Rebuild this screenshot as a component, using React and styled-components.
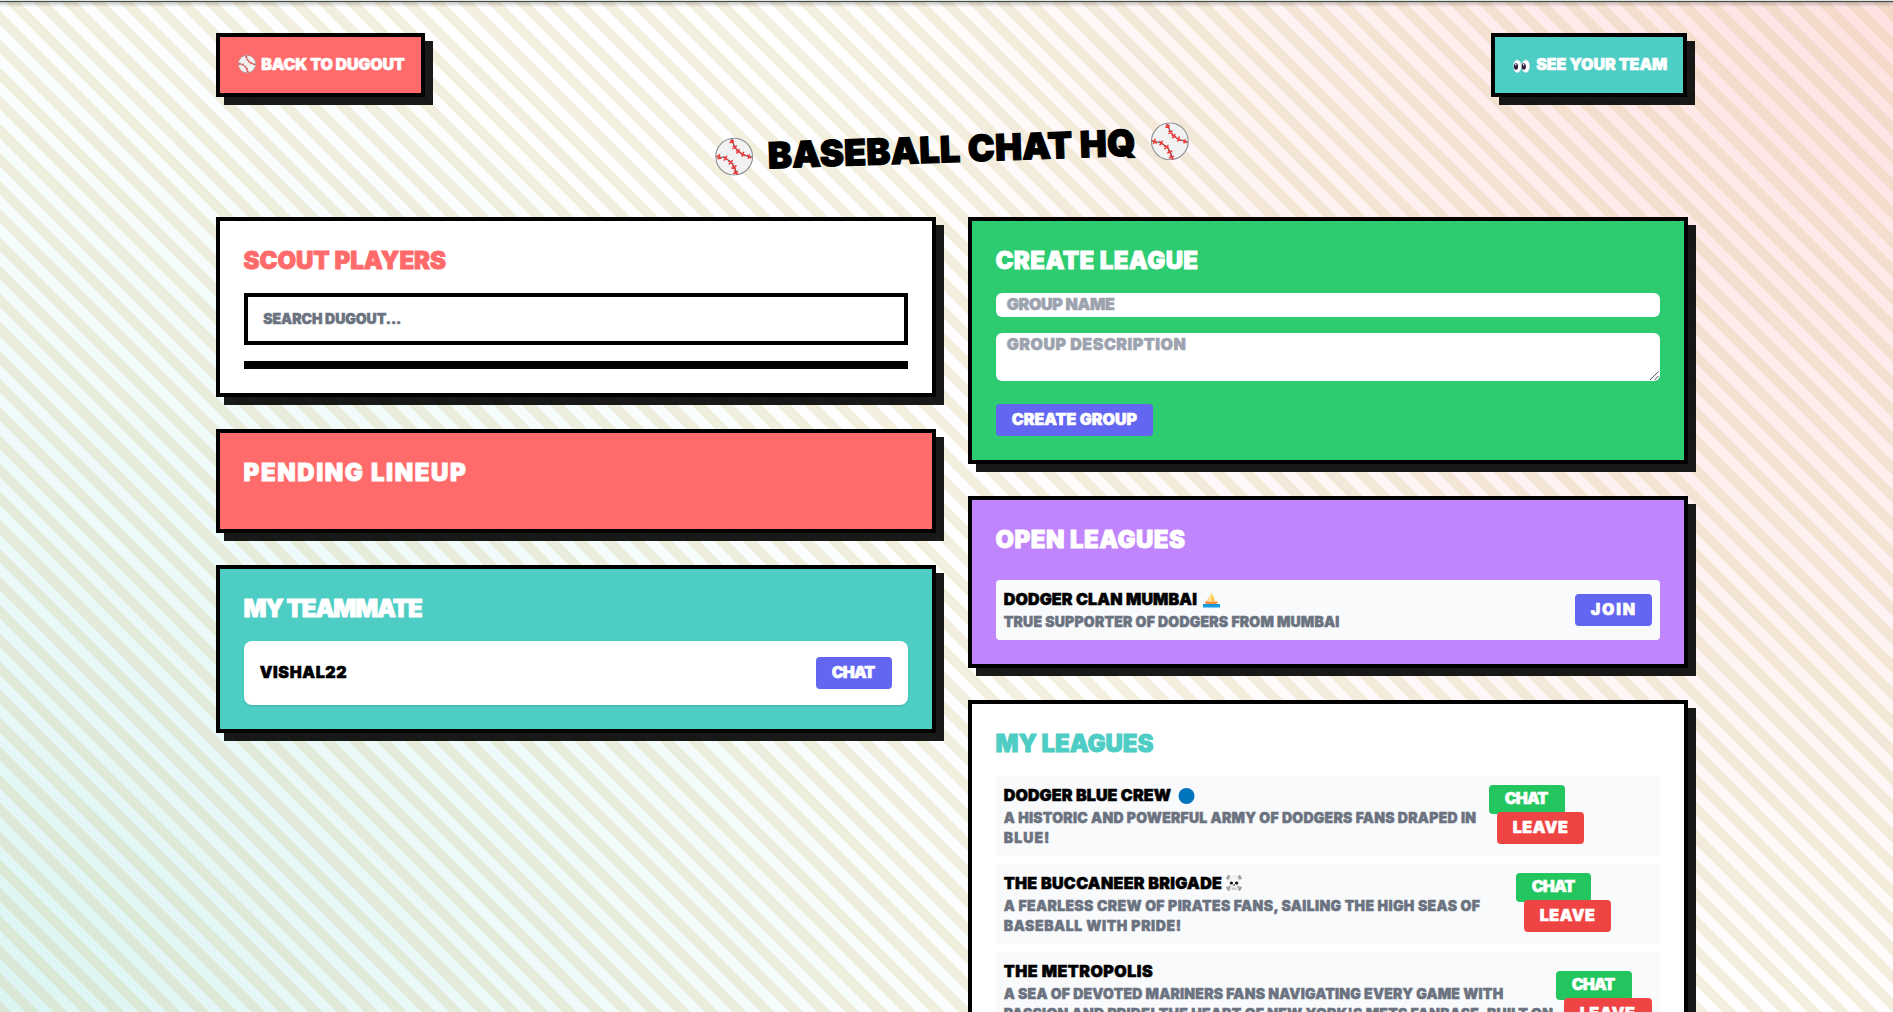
import React, { useLayoutEffect, useRef, useState } from "react";
import styled, { createGlobalStyle } from "styled-components";

const GlobalStyle = createGlobalStyle`
  *, *::before, *::after { box-sizing: border-box; }
  html, body { margin: 0; padding: 0; height: 1012px; overflow: hidden; }
  body {
    font-family: Inter, "Liberation Sans", sans-serif;
    font-weight: 900;
    font-size: 16px;
    line-height: 24px;
    color: #000;
    text-transform: uppercase;
  }
  h1, h2, p { margin: 0; font-size: inherit; font-weight: inherit; }
  button { font: inherit; color: inherit; text-transform: inherit; }
`;

const Page = styled.div`
  width: 1904px;
  height: 1012px;
  overflow: hidden;
  background:
    linear-gradient(#dfe6df 0 1px, #454a45 1px 2px, rgba(0, 0, 0, 0.22) 2px, rgba(0, 0, 0, 0) 7px) 0 0 / 100% 7px no-repeat,
    repeating-linear-gradient(45deg, transparent 0 10px, rgba(207, 189, 120, 0.24) 10px 20px) 0 0 / 1904px 1029px no-repeat,
    radial-gradient(circle at 0 100%, rgba(78, 205, 196, 0.2), rgba(78, 205, 196, 0) 50%),
    radial-gradient(circle at 100% 0, rgba(255, 107, 107, 0.2), rgba(255, 107, 107, 0) 50%),
    #fff;
`;

const Container = styled.div`
  width: 1536px;
  margin: 0 auto;
  padding: 33px 32px;
`;

const TopBar = styled.nav`
  display: flex;
  justify-content: space-between;
  padding-right: 1px;
`;

const NavButton = styled.button`
  display: flex;
  align-items: center;
  gap: ${(p) => p.$gap}px;
  width: ${(p) => p.$width}px;
  height: 64px;
  padding: 0 0 2px 17.5px;
  border: 4px solid #000;
  border-radius: 0;
  background: ${(p) => p.$color};
  color: #fff;
  box-shadow: 8px 8px 0 rgba(0, 0, 0, 0.9);
`;

const Title = styled.h1`
  display: flex;
  align-items: center;
  justify-content: center;
  gap: 15px;
  height: 40px;
  margin: 32px 0 48px;
  font-size: 36px;
  line-height: 40px;
  transform: rotate(-2deg);
`;

const Columns = styled.main`
  display: grid;
  grid-template-columns: 1fr 1fr;
  gap: 32px;
  align-items: start;
`;

const Column = styled.div`
  display: flex;
  flex-direction: column;
  gap: 32px;
`;

const Card = styled.section`
  padding: 24px;
  border: 4px solid #000;
  background: ${(p) => p.$color || "#fff"};
  box-shadow: 8px 8px 0 rgba(0, 0, 0, 0.9);
`;

const Heading = styled.h2`
  height: 32px;
  margin-bottom: ${(p) => p.$gap || 16}px;
  font-size: 24px;
  line-height: 32px;
  color: ${(p) => p.$color || "#fff"};
`;

const SearchBox = styled.div`
  display: flex;
  align-items: center;
  height: 52px;
  padding: 0 15.5px;
  border: 4px solid #000;
  font-size: 14px;
  color: #6b7280;
`;

const Results = styled.div`
  height: 8px;
  margin-top: 16px;
  background: #000;
`;

const Field = styled.div`
  display: flex;
  justify-content: space-between;
  height: ${(p) => p.$height}px;
  margin-bottom: ${(p) => p.$gap}px;
  padding: 0 1px 1px 11px;
  border-radius: 6px;
  background: #fff;
  color: #9ca3af;
  line-height: 22px;
`;

const Grip = styled.svg`
  display: block;
  align-self: flex-end;
`;

const Button = styled.button`
  display: block;
  width: ${(p) => p.$width}px;
  height: 32px;
  padding: 0 0 2px 16px;
  border: 0;
  border-radius: 4px;
  background: ${(p) => p.$color || "#6366f1"};
  color: #fff;
  text-align: left;
  line-height: 28px;
`;

const TeammateRow = styled.div`
  display: flex;
  align-items: center;
  justify-content: space-between;
  height: 64px;
  padding: 0 16px;
  border-radius: 8px;
  background: #fff;
  box-shadow: 0 1px 2px rgba(0, 0, 0, 0.15);
`;

const TeammateName = styled.div`
  height: 24px;
  line-height: 22px;
`;

const LeagueRow = styled.div`
  display: flex;
  align-items: center;
  justify-content: space-between;
  min-height: ${(p) => p.$height || 60}px;
  padding: 8px;
  border-radius: 4px;
  background: #f9fafc;

  & + & { margin-top: 8px; }
`;

const LeagueInfo = styled.div`
  align-self: flex-start;
`;

const LeagueName = styled.div`
  display: flex;
  align-items: center;
  gap: ${(p) => p.$gap || 0}px;
  height: 24px;
  line-height: 22px;
  padding-bottom: 2px;
`;

const Description = styled.p`
  font-size: 14px;
  line-height: 20px;
  color: #6b7280;
`;

const Actions = styled.div`
  flex: none;
  width: ${(p) => p.$width}px;
  margin-bottom: 3px;
`;

const ChatButton = styled(Button)`
  height: 29px;
  line-height: 27px;
`;

const LeaveButton = styled(Button)`
  position: relative;
  margin: -2px 0 0 8px;
`;

const Line = styled.span`
  display: block;
  height: 20px;
  white-space: nowrap;
`;

const Run = styled.span`
  display: inline-block;
  white-space: nowrap;
  margin-left: -0.02em;
  -webkit-text-stroke: 0.035em currentColor;
`;

/* Tracks the lettering so that the word fills the given width. */
function Lettering({ width, children }) {
  const ref = useRef(null);
  const [spacing, setSpacing] = useState(0);
  useLayoutEffect(() => {
    const em = parseFloat(getComputedStyle(ref.current).fontSize);
    setSpacing((width + em * 0.03 - ref.current.offsetWidth) / (children.length - 1));
  }, [width, children]);
  return (
    <Run ref={ref} style={{ letterSpacing: spacing, marginRight: -spacing }}>
      {children}
    </Run>
  );
}

const Baseball = ({ size, bold }) => (
  <svg width={size} height={size} viewBox="0 0 37 37">
    <circle cx="18.5" cy="18.5" r="17.9" fill="#f2f2f2" stroke="#8b8d90" strokeWidth="1.1" />
    <g fill="none" stroke="#55585c" strokeWidth={bold ? 1.3 : 1.1}>
      <path d="M17 1C18 10 24 18 36 19.5" />
      <path d="M1 18C12 18 19 25 20.5 36" />
    </g>
    <g fill="none" stroke="#f03a3a" strokeWidth={bold ? 1.6 : 1.5}>
      <path d="M14.500 5l4.500-2M15.500 2l3 4M17 11l4.500-3M17.500 8l4 3.500M21 15.500l3-4M20.500 12.500l4.500 2.500M26 19l2-5M25 15.500l4.500 2.500M32 21l1.500-4M31 17.500l4 3" />
      <path d="M2.500 20.500l2-5M1.500 17l4.500 3M8.500 22l3-4.500M8 18l4 3.500M13 26l4-4M12.500 22.500l5 3M15.500 30l5-2.500M16.500 27l3 4M17 35l5-2M18 32l3.500 4" />
    </g>
  </svg>
);

const Eyes = () => (
  <svg width="17" height="17" viewBox="0 0 17 17">
    <ellipse cx="4.3" cy="10.2" rx="3.9" ry="6.3" fill="#fff" stroke="#d3dade" strokeWidth=".6" />
    <ellipse cx="12.7" cy="10.2" rx="3.9" ry="6.3" fill="#fff" stroke="#d3dade" strokeWidth=".6" />
    <ellipse cx="3" cy="10.5" rx="2.1" ry="3.3" fill="#31213f" />
    <ellipse cx="10.8" cy="10.5" rx="2.1" ry="3.3" fill="#31213f" />
    <circle cx="2.800" cy="8.700" r=".8" fill="#fff" />
    <circle cx="10.600" cy="8.700" r=".8" fill="#fff" />
  </svg>
);

const Boat = () => (
  <svg width="17" height="17" viewBox="0 0 17 17">
    <path d="M7.500 1.500v8.500H3.200C5.300 7.500 7 5 7.500 1.500z" fill="#ffd983" />
    <path d="M8.200 1c1 4 3.300 5.500 3.300 9H8.200z" fill="#ffc52e" />
    <path d="M1.500 10.500h13.500l-2 3.500H3.500z" fill="#f78c3b" />
    <path d="M0 13h17v3.500H0z" fill="#139be0" />
  </svg>
);

const BlueCircle = () => (
  <svg width="17" height="17" viewBox="0 0 17 17">
    <circle cx="8.500" cy="9" r="8" fill="#0075bd" />
  </svg>
);

const Skull = () => (
  <svg width="16" height="16" viewBox="0 0 16 16">
    <path d="M2 2.500l12 11M14 2.500l-12 11" stroke="#a3a3a3" strokeWidth="2" />
    <g fill="#a3a3a3">
      <circle cx="2.600" cy="1.500" r="1.400" /><circle cx="1.500" cy="3.200" r="1.400" />
      <circle cx="13.400" cy="1.500" r="1.400" /><circle cx="14.500" cy="3.200" r="1.400" />
      <circle cx="2.600" cy="14.500" r="1.400" /><circle cx="1.500" cy="12.800" r="1.400" />
      <circle cx="13.400" cy="14.500" r="1.400" /><circle cx="14.500" cy="12.800" r="1.400" />
    </g>
    <path d="M8 1C4.500 1 2.800 3.500 2.800 6.500c0 2 .7 3.200 1.700 4V14c0 .7 7 .7 7 0v-3.500c1-.8 1.700-2 1.700-4C13.200 3.500 11.500 1 8 1z" fill="#f4f4f4" stroke="#c9c9c9" strokeWidth=".4" />
    <circle cx="5.400" cy="8" r="1.600" fill="#111" />
    <circle cx="10.600" cy="8" r="1.600" fill="#111" />
    <path d="M8 9l.8 1.700H7.200zM6.300 12.500v2M8 12.500v2M9.700 12.500v2" fill="#111" stroke="#777" strokeWidth=".5" />
  </svg>
);

const leagues = [
  {
    name: ["Dodger Blue Crew", 166.5],
    icon: <BlueCircle />,
    gap: 6.5,
    lines: [
      ["A historic and powerful army of Dodgers fans draped in", 472],
      ["Blue!", 45],
    ],
    height: 80,
    actions: 163,
    chat: 76,
    leave: 87,
  },
  {
    name: ["The Buccaneer Brigade", 218],
    icon: <Skull />,
    gap: 4,
    lines: [
      ["A fearless crew of Pirates fans, sailing the high seas of", 475.5],
      ["baseball with pride!", 177],
    ],
    height: 80,
    actions: 136,
    chat: 75,
    leave: 87,
  },
  {
    name: ["The Metropolis", 148],
    lines: [
      ["A sea of devoted Mariners fans navigating every game with", 498.5],
      ["passion and pride! The heart of New York's Mets fanbase, built on", 549],
    ],
    height: 100,
    actions: 96,
    chat: 76,
    leave: 88,
  },
];

export default function App() {
  return (
    <>
      <GlobalStyle />
      <Page>
        <Container>
          <TopBar>
            <NavButton $color="#ff6b6b" $width={209} $gap={6}>
              <Baseball size={18} bold />
              <Lettering width={143}>Back to Dugout</Lettering>
            </NavButton>
            <NavButton $color="#4ecdc4" $width={196} $gap={7}>
              <Eyes />
              <Lettering width={131}>See Your Team</Lettering>
            </NavButton>
          </TopBar>
          <Title>
            <Baseball size={38} />
            <Lettering width={367}>Baseball Chat HQ</Lettering>
            <Baseball size={38} />
          </Title>
          <Columns>
            <Column>
              <Card>
                <Heading $color="#ff6b6b"><Lettering width={202}>Scout Players</Lettering></Heading>
                <SearchBox><Lettering width={138}>Search dugout...</Lettering></SearchBox>
                <Results />
              </Card>
              <Card $color="#ff6b6b">
                <Heading><Lettering width={221}>Pending Lineup</Lettering></Heading>
              </Card>
              <Card $color="#4ecdc4">
                <Heading><Lettering width={179}>My Teammate</Lettering></Heading>
                <TeammateRow>
                  <TeammateName><Lettering width={86}>vishal22</Lettering></TeammateName>
                  <Button $width={76}><Lettering width={43}>Chat</Lettering></Button>
                </TeammateRow>
              </Card>
            </Column>
            <Column>
              <Card $color="#2ecc71">
                <Heading><Lettering width={202}>Create League</Lettering></Heading>
                <Field $height={24} $gap={16}><Lettering width={108}>Group name</Lettering></Field>
                <Field $height={48} $gap={23}>
                  <Lettering width={179}>Group description</Lettering>
                  <Grip width="9" height="9" viewBox="0 0 9 9">
                    <path d="M0 9L8.500 .5M4.500 9L8.500 5" stroke="#555" strokeWidth="1" />
                  </Grip>
                </Field>
                <Button $width={157}><Lettering width={125}>Create Group</Lettering></Button>
              </Card>
              <Card $color="#c084fc">
                <Heading $gap={24}><Lettering width={189}>Open Leagues</Lettering></Heading>
                <LeagueRow>
                  <LeagueInfo>
                    <LeagueName $gap={6}>
                      <Lettering width={193}>Dodger Clan Mumbai</Lettering>
                      <Boat />
                    </LeagueName>
                    <Description>
                      <Line><Lettering width={335}>True supporter of Dodgers from Mumbai</Lettering></Line>
                    </Description>
                  </LeagueInfo>
                  <Button $width={77}><Lettering width={44}>Join</Lettering></Button>
                </LeagueRow>
              </Card>
              <Card>
                <Heading $color="#4ecdc4"><Lettering width={157.5}>My Leagues</Lettering></Heading>
                {leagues.map((l) => (
                  <LeagueRow key={l.name[0]} $height={l.height}>
                    <LeagueInfo>
                      <LeagueName $gap={l.gap}>
                        <Lettering width={l.name[1]}>{l.name[0]}</Lettering>
                        {l.icon}
                      </LeagueName>
                      <Description>
                        {l.lines.map(([text, width]) => (
                          <Line key={text}><Lettering width={width}>{text}</Lettering></Line>
                        ))}
                      </Description>
                    </LeagueInfo>
                    <Actions $width={l.actions}>
                      <ChatButton $color="#22c55e" $width={l.chat}><Lettering width={43}>Chat</Lettering></ChatButton>
                      <LeaveButton $color="#ef4444" $width={l.leave}><Lettering width={55}>Leave</Lettering></LeaveButton>
                    </Actions>
                  </LeagueRow>
                ))}
              </Card>
            </Column>
          </Columns>
        </Container>
      </Page>
    </>
  );
}
